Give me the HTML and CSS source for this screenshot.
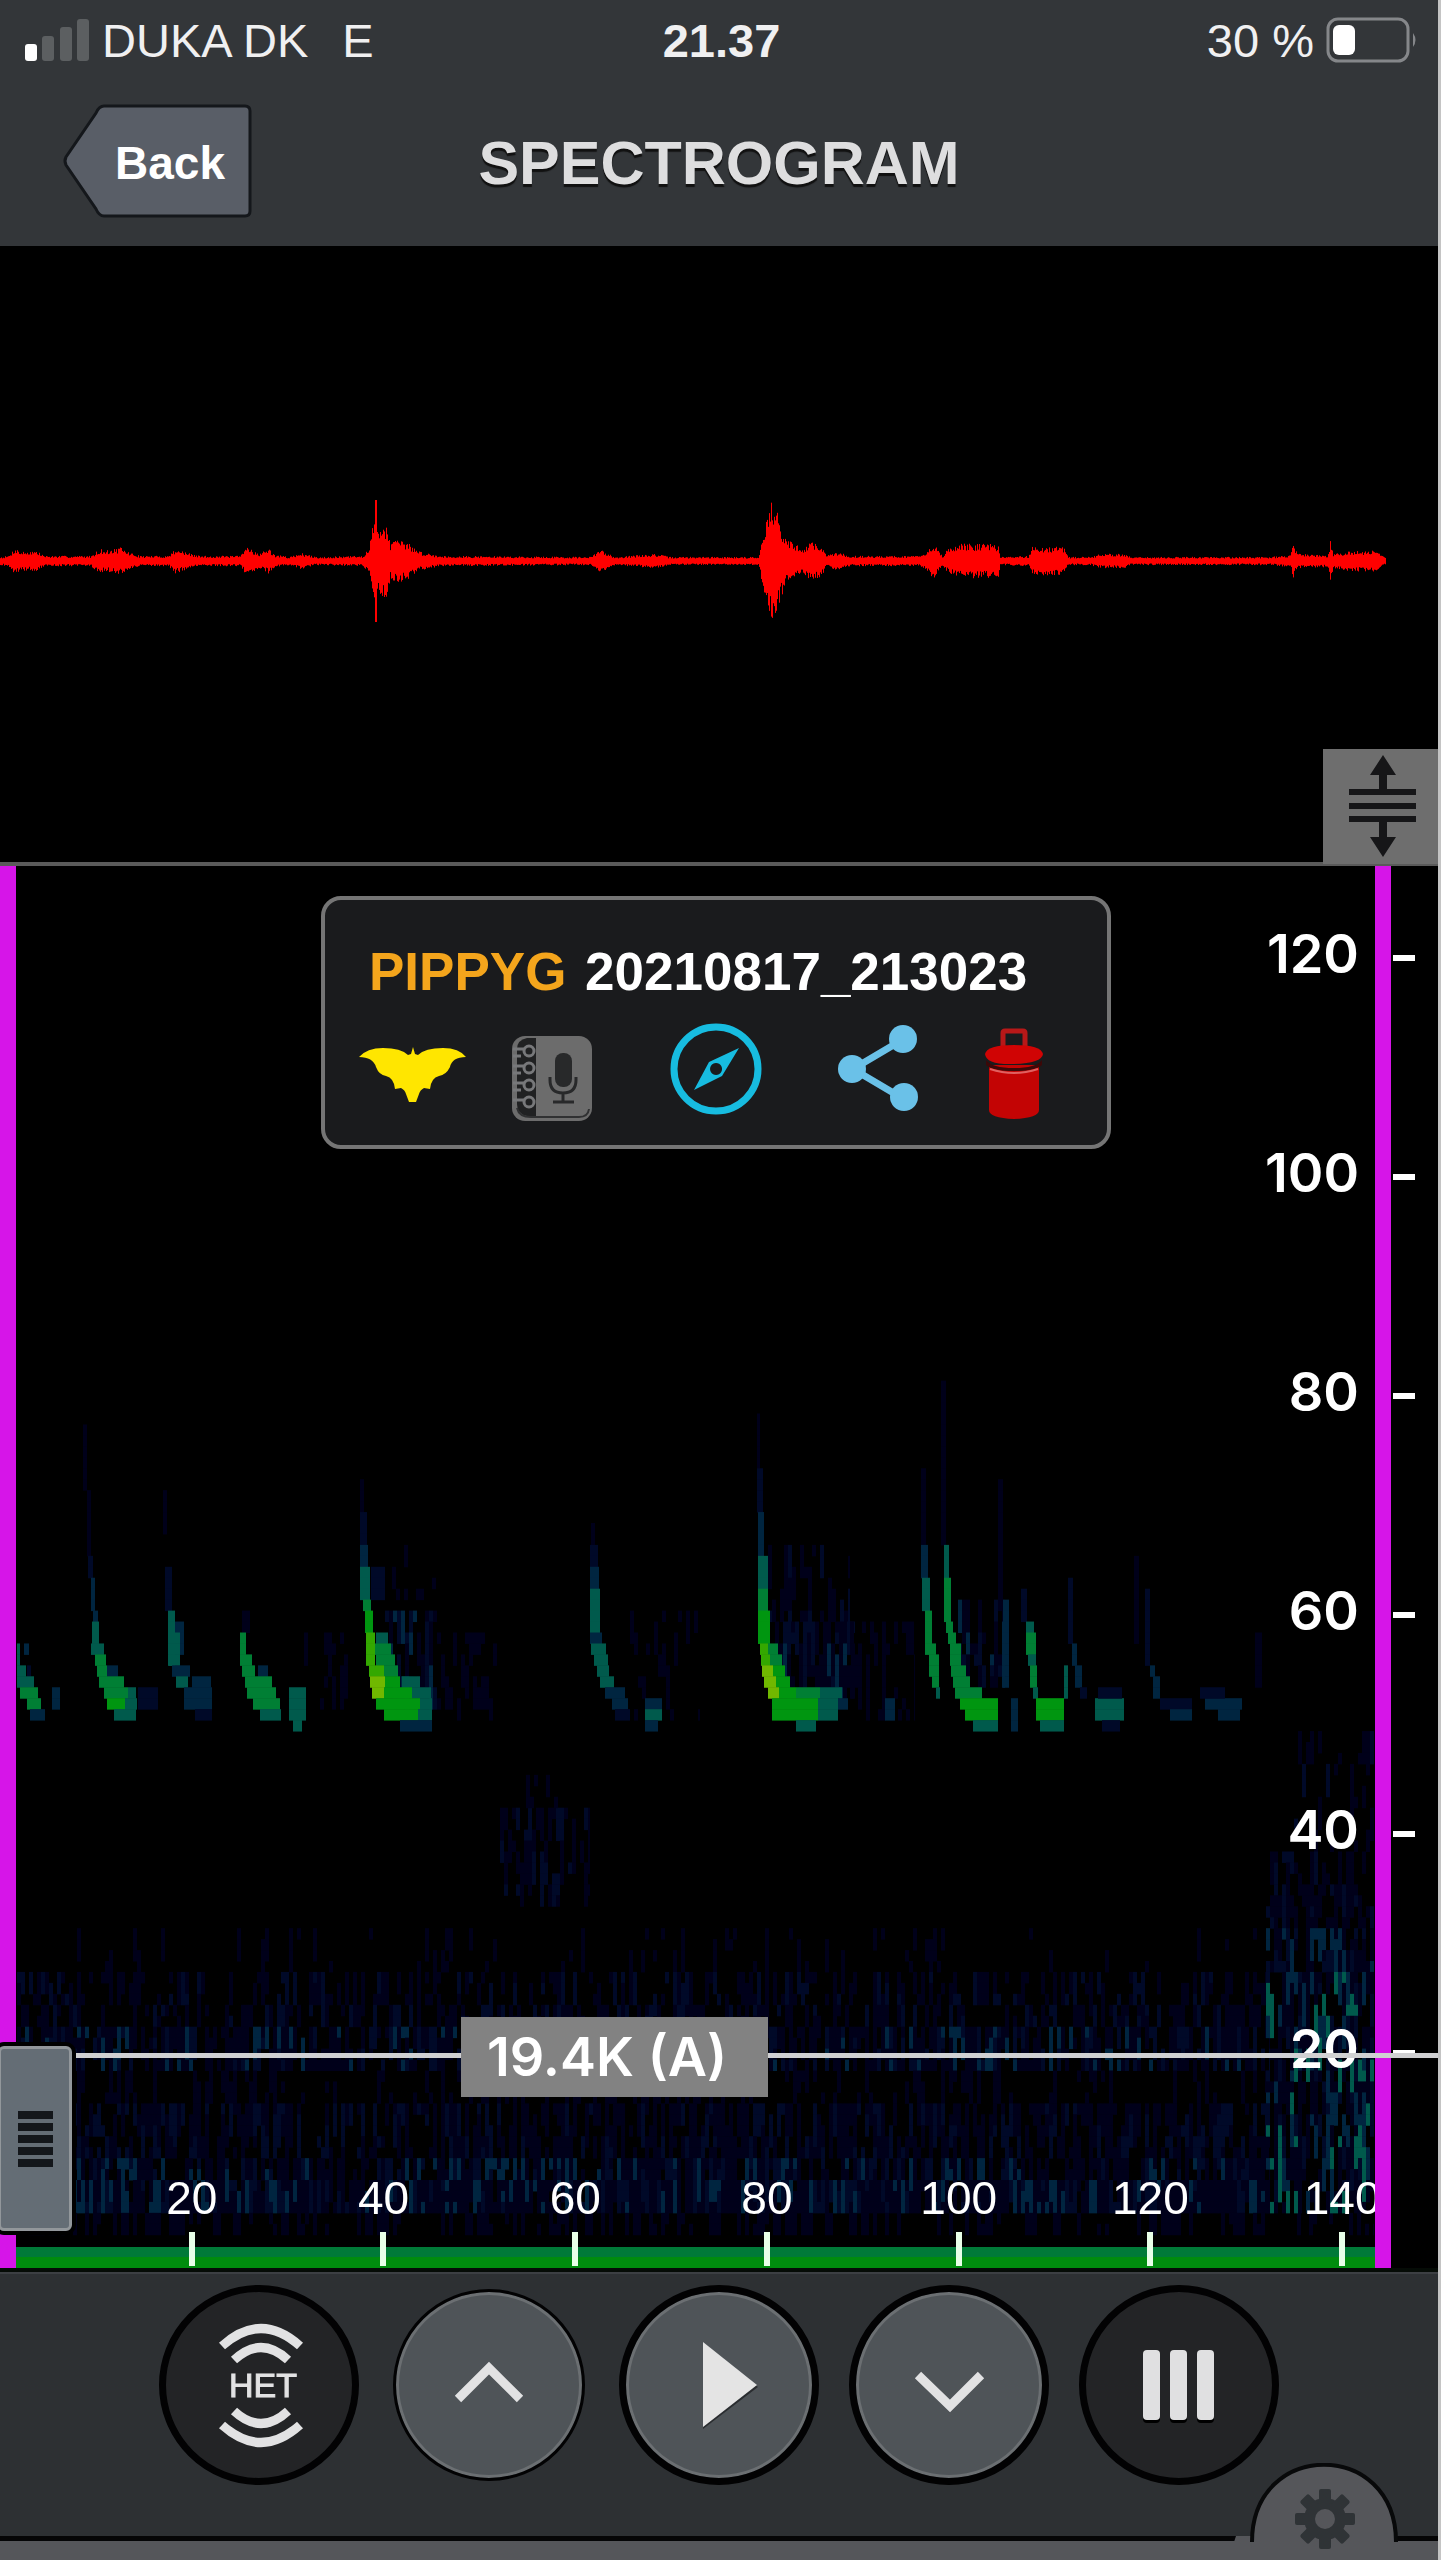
FILE: index.html
```html
<!DOCTYPE html>
<html lang="en">
<head>
<meta charset="utf-8">
<meta name="viewport" content="width=device-width, initial-scale=1">
<title>Spectrogram</title>
<link rel="stylesheet" href="styles.css">
</head>
<body>
<header class="header">
  <div class="status">
    <div class="status-left">
      <svg class="signal" viewBox="0 0 64 42" aria-hidden="true"><rect x="0" y="25" width="12" height="17" rx="3" fill="#fff"/><g fill="#5c5f61"><rect x="17" y="17" width="12" height="25" rx="3"/><rect x="35" y="8" width="12" height="34" rx="3"/><rect x="52" y="0" width="12" height="42" rx="3"/></g></svg>
      <span>DUKA DK</span><span class="network">E</span>
    </div>
    <div class="clock">21.37</div>
    <div class="status-right">
      <span>30 %</span>
      <svg class="battery" viewBox="0 0 92 46" aria-hidden="true"><rect x="2" y="2" width="80" height="42" rx="10" fill="none" stroke="#85878a" stroke-width="3"/><rect x="7" y="8" width="22" height="30" rx="6" fill="#fff"/><path d="M87 16q5 7 0 14z" fill="#85878a"/></svg>
    </div>
  </div>
  <div class="nav">
    <button class="back" type="button">
      <svg class="back-shape" viewBox="0 0 190 114" aria-hidden="true"><path d="M42 2H183q5 0 5 5V107q0 5-5 5H42q-5 0-8-7L4 61q-2-4 0-8L34 9q3-7 8-7z" fill="#595e67" stroke="#14171b" stroke-width="3"/></svg>
      <span class="back-label">Back</span>
    </button>
    <h1 class="title">SPECTROGRAM</h1>
  </div>
</header>
<main class="main">
  <section class="wave" aria-label="Waveform">
    <canvas class="plot" id="wave" width="1438" height="616"></canvas>
    <button class="resize" type="button" aria-label="Resize panes">
      <svg viewBox="0 0 115 114" aria-hidden="true"><path d="M26 42h67M26 56h67M26 69h67" stroke="#161618" stroke-width="6"/><path d="M60 5l13 20h-9v16h-8V25h-9zM60 107l13-20h-9V70h-8v17h-9z" fill="#161618"/></svg>
    </button>
  </section>
  <section class="spec" aria-label="Spectrogram">
    <canvas class="plot" id="spec" width="1438" height="1402"></canvas>
    <div class="card">
      <h2 class="card-title"><span class="species">PIPPYG</span> 20210817_213023</h2>
      <div class="actions">
        <button type="button" aria-label="Species"><svg viewBox="0 0 107 100"><path d="M0 37Q8 28 24 28Q42 28 49 35L52 34L54 27L56 34L59 35Q66 28 84 28Q100 28 107 37Q93 37 91 47Q87 55 80 56Q72 58 71 69L65 68Q61 70 60 74L57 82H50L47 74Q46 70 42 68L36 69Q35 58 27 56Q20 55 17 47Q14 37 0 37z" fill="#ffe600"/></svg></button>
        <button type="button" aria-label="Notes"><svg viewBox="0 0 84 100"><rect x="2" y="16" width="80" height="85" rx="13" fill="#6c6c6c"/><path d="M26 18H17Q7 20 7 29V84Q7 94 17 96h9z" fill="#202122"/><path d="M7 88q2 9 14 9h48q9 0 10-8" fill="none" stroke="#303132" stroke-width="2"/><g fill="none" stroke="#77787a" stroke-width="3"><circle cx="19" cy="31" r="5"/><circle cx="19" cy="48" r="5"/><circle cx="19" cy="65" r="5"/><circle cx="19" cy="82" r="5"/><path d="M3 29h11M3 46h11M3 63h11M3 80h11M3 36h8M3 53h8M3 70h8"/></g><rect x="45" y="33" width="17" height="34" rx="8" fill="#28292a"/><path d="M40 57v3q0 13 13 13t13-13v-3M53 73v9M43 82h21" fill="none" stroke="#28292a" stroke-width="3"/></svg></button>
        <button type="button" aria-label="Location"><svg viewBox="0 0 100 100"><circle cx="51" cy="49" r="42" fill="none" stroke="#17bce0" stroke-width="7"/><path fill-rule="evenodd" d="M74 28L57 56L29 70L44 42zM51 43a6 6 0 1 0 .1 0z" fill="#17bce0"/></svg></button>
        <button type="button" aria-label="Share"><svg viewBox="0 0 84 100"><path d="M66 20L17 49L66 78" fill="none" stroke="#6ac1e8" stroke-width="7"/><g fill="#6ac1e8"><circle cx="67" cy="19" r="14"/><circle cx="16" cy="49" r="14"/><circle cx="68" cy="77" r="14"/></g></svg></button>
        <button type="button" aria-label="Delete"><svg viewBox="0 0 60 100"><path d="M19 28V13q0-2 2-2h18q2 0 2 2v15" fill="none" stroke="#b81818" stroke-width="5"/><path d="M5 45v45q0 8 25 9q25-1 25-9V45z" fill="#c30404"/><path d="M1 34Q3 25 30 25T59 34Q58 43 30 44T1 34z" fill="#d00404"/><path d="M2 40q6 8 28 8t28-8v5q-7 6-28 6T2 45z" fill="#3c0808"/><path d="M6 49q24 8 48 0" fill="none" stroke="#e06060" stroke-width="2"/></svg></button>
      </div>
    </div>
    <div class="freq">
      <div>120</div><div>100</div><div>80</div><div>60</div><div>40</div><div>20</div>
    </div>
    <div class="time">
      <div>20</div><div>40</div><div>60</div><div>80</div><div>100</div><div>120</div><div>140</div>
    </div>
    <div class="limit limit-start"></div>
    <div class="limit limit-end"></div>
    <div class="marker"><output class="marker-label">19.4K (A)</output></div>
    <button class="handle" type="button" aria-label="Move frequency marker"><i></i><i></i><i></i><i></i><i></i></button>
  </section>
</main>
<footer class="toolbar">
  <div class="controls">
    <button class="round dark" type="button" aria-label="Heterodyne">
      <svg viewBox="0 0 200 200"><g fill="none" stroke="#e2e2e3" stroke-width="9"><path d="M63 61Q102 26 141 61M75 75Q102 50 129 75M75 126Q102 151 129 126M63 140Q102 175 141 140"/></g></svg><span class="het">HET</span>
    </button>
    <button class="round thin" type="button" aria-label="Up"><svg viewBox="0 0 200 200"><path d="M69 114L100 83L131 114" fill="none" stroke="#e2e2e3" stroke-width="9"/></svg></button>
    <button class="round" type="button" aria-label="Play"><svg viewBox="0 0 200 200"><path d="M84 60V144L139 102z" fill="#2a2d30"/><path d="M84 57V142L138 100z" fill="#e4e4e4"/></svg></button>
    <button class="round" type="button" aria-label="Down"><svg viewBox="0 0 200 200"><path d="M69 90L101 121L132 90" fill="none" stroke="#e2e2e3" stroke-width="9"/></svg></button>
    <button class="round dark" type="button" aria-label="Columns"><svg viewBox="0 0 200 200"><g fill="#000"><rect x="64" y="68" width="17" height="70" rx="4"/><rect x="91" y="68" width="17" height="70" rx="4"/><rect x="118" y="68" width="17" height="70" rx="4"/></g><g fill="#e0e0e1"><rect x="64" y="65" width="17" height="70" rx="4"/><rect x="91" y="65" width="17" height="70" rx="4"/><rect x="118" y="65" width="17" height="70" rx="4"/></g></svg></button>
  </div>
  <button class="settings" type="button" aria-label="Settings">
    <svg viewBox="0 0 180 97"><path d="M0 79L2 73H17L19 97H0z" fill="#55565a"/><path d="M18 97V79C18 -24 162 -24 162 79V97z" fill="#55565a"/><path d="M18 79C18 -24 162 -24 162 79" fill="none" stroke="#08090a" stroke-width="4"/><g transform="translate(91 56)" fill="#2f3336"><circle r="21"/><rect x="-6" y="-30" width="12" height="60" rx="2"/><rect x="-6" y="-30" width="12" height="60" rx="2" transform="rotate(45)"/><rect x="-6" y="-30" width="12" height="60" rx="2" transform="rotate(90)"/><rect x="-6" y="-30" width="12" height="60" rx="2" transform="rotate(135)"/><circle r="10" fill="#55565a"/></g></svg>
  </button>
</footer>
<script src="plot.js"></script>
</body>
</html>
```
FILE: styles.css
```css
* { box-sizing: border-box; }
body {
  margin: 0;
  min-height: 100vh;
  display: flex;
  flex-direction: column;
  background: #000;
  color: #fff;
  border-right: 3px solid #c4c4c4;
  font-family: "Liberation Sans", Arial, sans-serif;
}
button { padding: 0; border: 0; background: none; color: inherit; font: inherit; display: block; }
svg { display: block; }
h1, h2 { margin: 0; }

.header { background: #333639; }
.status {
  display: grid;
  grid-template-columns: 1fr auto 1fr;
  align-items: center;
  height: 80px;
  padding: 0 20px 0 25px;
  font-size: 47px;
  color: #f0f0f1;
}
.status-left, .status-right { display: flex; align-items: center; }
.status-right { justify-content: flex-end; gap: 12px; }
.signal { width: 64px; height: 42px; margin-right: 13px; }
.network { margin-left: 34px; }
.clock { font-weight: bold; }
.battery { width: 92px; height: 46px; }

.nav {
  display: grid;
  grid-template-columns: 1fr auto 1fr;
  align-items: start;
  height: 166px;
  padding: 24px 62px 0;
}
.back { position: relative; width: 190px; height: 114px; }
.back-shape { width: 100%; height: 100%; }
.back-label {
  position: absolute;
  inset: 4px 0 0 26px;
  display: grid;
  place-items: center;
  font-size: 46px;
  font-weight: bold;
}
.title { font-size: 61px; line-height: 118px; color: #dededf; text-shadow: 0 3px 1px #111; }

.main { flex: 1; display: flex; flex-direction: column; }
.wave { position: relative; flex: 616 1 0; min-height: 300px; border-bottom: 4px solid #5a5a5a; }
.plot { position: absolute; inset: 0; width: 100%; height: 100%; }
.resize { position: absolute; right: 0; bottom: -2px; width: 115px; height: 115px; background: #6e6e6e; }

.spec { position: relative; flex: 1402 1 0; min-height: 900px; overflow: hidden; padding-right: 6px; }
.card {
  position: relative;
  width: 790px;
  margin: 30px auto 0;
  padding: 42px 20px 25px 22px;
  border: 4px solid #757575;
  border-radius: 20px;
  background: #1a1b1d;
}
.card-title { padding-left: 22px; font-size: 53px; line-height: 60px; margin-bottom: 18px; }
.species { color: #f4a51c; margin-right: 4px; }
.actions { display: grid; grid-template-columns: 130px 150px 176px 150px 122px; justify-items: center; }
.actions svg { height: 100px; overflow: visible; }

.freq {
  position: absolute;
  inset: 0 23px 0 auto;
  display: grid;
  grid-template-rows: 118fr repeat(5, 219fr) 189fr;
  align-items: end;
  font: 600 54px/60px Inter, sans-serif;
}
.freq div { display: flex; justify-content: flex-end; align-items: center; gap: 34px; }
.freq div::after { content: ""; width: 22px; height: 6px; margin-top: 8px; background: #fff; }
.time {
  position: absolute;
  inset: auto 0 0 0;
  display: grid;
  grid-template-columns: repeat(7, 1fr);
  padding: 0 0 2px 6.67%;
  font-size: 46px;
  line-height: 52px;
}
.time div { display: flex; flex-direction: column; align-items: center; gap: 8px; }
.time div::after { content: ""; width: 6px; height: 34px; background: #e8ffe8; }

.limit { position: absolute; top: 0; bottom: 0; width: 16px; background: #d615e8; }
.limit-start { left: 0; }
.limit-end { right: 47px; }
.marker {
  position: absolute;
  top: 84.8%;
  left: 75px;
  right: 0;
  height: 5px;
  margin-top: -2px;
  background: #d0d0d2;
}
.marker-label {
  position: absolute;
  top: -36px;
  left: 386px;
  width: 307px;
  padding-left: 26px;
  background: #828282;
  font: 600 54px/80px Inter, sans-serif;
}
.handle {
  position: absolute;
  top: 84.2%;
  left: -2px;
  width: 74px;
  height: 185px;
  display: flex;
  flex-direction: column;
  justify-content: center;
  align-items: center;
  gap: 4px;
  border: 3px solid #92979b;
  border-radius: 6px;
  background: #646d75;
  box-shadow: 0 0 0 4px #000;
}
.handle i { width: 35px; height: 8px; background: #14171b; }

.toolbar { position: relative; height: 292px; background: #2d3033; border-top: 4px solid #050b06; border-bottom: 19px solid #55565a; }
.controls {
  display: flex;
  justify-content: center;
  align-items: center;
  gap: 30px;
  height: 269px;
  padding-bottom: 40px;
  border-top: 2px solid #3c3f43;
  border-bottom: 5px solid #050506;
}
.round {
  position: relative;
  width: 200px;
  height: 200px;
  border: 7px solid #020203;
  border-radius: 50%;
  background: #4f5458;
  box-shadow: inset 0 0 0 3px #6b6f72;
}
.round svg { position: absolute; inset: -7px; width: 200px; height: 200px; }
.dark { background: #232426; box-shadow: none; }
.thin { width: 192px; height: 192px; margin: 0 4px; border-width: 3px; }
.het { position: relative; left: 4px; font-size: 34px; color: #e2e2e3; -webkit-text-stroke: 1px #e2e2e3; }
.settings { position: absolute; right: 24px; bottom: -19px; width: 180px; height: 97px; }
```
FILE: plot.js
```javascript
// Repeatable random numbers, so that the noise is the same on every load.
let seed = 7;
function rnd() {
  seed = (seed * 1664525 + 1013904223) % 4294967296;
  return seed / 4294967296;
}

// Waveform: [x, half amplitude], interpolated between points.
const envelope = [[0,4],[8,5],[15,13],[20,9],[35,10],[45,5],[90,5],[100,12],[105,10],[120,13],[130,8],[140,5],[168,5],[175,12],[190,7],[200,5],[240,5],[247,15],[258,7],[268,12],[275,6],[290,4],[300,8],[315,4],[362,5],[369,12],[372,36],[386,36],[390,18],[400,21],[410,16],[420,9],[440,5],[590,4],[600,11],[615,4],[655,7],[670,4],[758,4],[764,34],[772,60],[777,48],[785,22],[795,16],[803,13],[812,19],[822,14],[826,5],[835,9],[850,5],[920,5],[926,8],[933,18],[942,5],[948,12],[963,17],[998,16],[1000,4],[1028,5],[1032,14],[1050,14],[1064,13],[1068,4],[1090,4],[1100,7],[1125,7],[1130,4],[1270,4],[1290,6],[1293,16],[1297,7],[1327,6],[1330,19],[1333,7],[1350,10],[1375,10],[1386,3]];
const w = document.getElementById("wave").getContext("2d");
w.fillStyle = "#f00";
let k = 0;
for (let x = 0; x < 1386; x++) {
  while (envelope[k + 1][0] <= x && k < envelope.length - 2) k++;
  const [x0, a0] = envelope[k], [x1, a1] = envelope[k + 1];
  const a = a0 + (a1 - a0) * (x - x0) / (x1 - x0);
  const up = a * (0.6 + rnd() * 0.45), down = a * (0.6 + rnd() * 0.45);
  w.fillRect(x, 315 - up, 1, up + down);
}
w.fillRect(375, 254, 2, 122);

// Spectrogram: rows are 11 units high, levels run from quiet to loud.
const levels = ["#00001a", "#000928", "#002540", "#005a4c", "#007f34", "#009610", "#34a800", "#70b800"];
const rowH = 10.95;
const s = document.getElementById("spec").getContext("2d");
function cell(row, x0, x1, level) {
  s.fillStyle = levels[level];
  s.fillRect(x0, row * rowH, x1 - x0, rowH + 0.5);
}
// Noise is made of upright streaks, one to four rows tall.
function noise(x0, x1, r0, r1, density, top) {
  for (let x = x0; x < x1; x += 4)
    for (let r = r0; r < r1;) {
      const len = 1 + Math.floor(rnd() * 3);
      if (rnd() < density) {
        const level = Math.floor(Math.pow(rnd(), 2) * (top + 1));
        for (let i = r; i < Math.min(r + len, r1); i++) cell(i, x, Math.min(x + 4, x1), level);
      }
      r += len;
    }
}
noise(17, 1270, 97, 101, 0.12, 0);
noise(17, 1270, 101, 104, 0.4, 1);
noise(17, 1270, 104, 106, 0.5, 1);
noise(17, 1270, 106, 110, 0.7, 2);
noise(17, 1270, 110, 113, 0.25, 0);
noise(17, 1270, 113, 118, 0.6, 1);
noise(17, 1270, 118, 120, 0.7, 2);
noise(17, 1270, 120, 123, 0.95, 2);
noise(17, 1374, 123, 125, 0.4, 0);
noise(500, 590, 86, 95, 0.5, 1);
noise(510, 575, 83, 86, 0.3, 0);
noise(1290, 1374, 79, 90, 0.25, 1);
noise(1266, 1374, 90, 97, 0.5, 1);
noise(1266, 1374, 97, 101, 0.65, 2);
noise(1266, 1374, 101, 111, 0.75, 3);
noise(1266, 1374, 111, 123, 0.65, 3);
noise(380, 440, 62, 68, 0.2, 0);
noise(385, 445, 68, 77, 0.65, 2);
noise(445, 500, 70, 78, 0.35, 0);
noise(300, 350, 70, 77, 0.25, 0);
noise(630, 700, 68, 78, 0.25, 0);
noise(768, 850, 62, 69, 0.4, 1);
noise(775, 855, 69, 76, 0.7, 2);
noise(850, 915, 69, 78, 0.35, 0);
noise(958, 1005, 67, 75, 0.65, 2);

// Bat calls: [first row, last row, x start, x end, level]
const calls = [
  [71,72,17,20,3],[71,71,24,29,2],[73,73,17,26,3],[73,73,27,31,1],[74,74,17,34,3],[75,75,20,38,4],[76,76,27,41,4],[77,77,30,45,2],[75,76,52,60,2],
  [51,56,83,87,0],[57,62,87,91,0],[63,64,88,93,1],[65,67,91,95,2],[68,68,93,98,2],[69,70,92,99,3],[71,71,91,104,3],[72,72,95,106,4],[73,73,97,107,4],[73,73,107,118,2],[74,74,99,124,4],[75,75,104,128,4],[75,75,128,136,3],[76,76,107,125,5],[76,76,125,137,3],[77,77,114,136,3],[75,76,138,158,1],
  [57,60,163,167,0],[64,67,165,172,1],[68,72,168,175,3],[69,71,175,184,2],[70,72,169,180,3],[73,73,172,190,2],[74,74,176,188,3],[74,74,192,211,2],[75,76,184,212,2],[77,77,195,212,1],
  [68,69,242,250,0],[70,71,240,246,4],[72,72,240,252,4],[73,73,242,255,4],[73,73,258,268,2],[74,74,245,272,4],[75,75,247,276,4],[76,76,253,280,4],[77,77,260,281,3],[75,77,289,306,3],[78,78,293,302,3],
  [56,58,360,364,0],[59,61,360,367,1],[62,63,360,368,2],[64,66,360,370,3],[64,66,371,385,1],[67,67,363,371,4],[68,69,365,373,5],[70,72,366,375,6],[70,70,376,388,3],[71,71,375,391,4],[72,72,376,395,4],[73,73,369,384,6],[73,73,384,398,4],[74,74,370,385,7],[74,74,385,400,5],[74,74,402,420,3],[75,75,372,384,7],[75,75,384,412,5],[75,75,412,431,3],[76,76,376,420,5],[76,76,420,432,3],[77,77,384,418,5],[77,77,418,432,3],[78,78,400,432,2],
  [60,61,591,595,0],[62,63,590,598,1],[64,65,590,599,2],[66,69,590,600,3],[70,70,590,602,2],[71,71,591,606,3],[72,72,594,608,3],[73,73,597,609,3],[74,74,600,614,3],[75,75,605,625,2],[76,76,612,628,2],[77,77,615,630,1],[76,76,645,662,2],[77,77,645,662,3],[78,78,645,658,2],
  [50,54,757,760,0],[55,58,757,763,1],[59,62,758,764,2],[63,65,758,768,3],[66,67,758,768,4],[68,70,758,770,5],[71,71,760,768,6],[71,71,768,778,4],[72,72,761,770,6],[72,72,770,782,4],[73,73,762,773,7],[73,73,773,785,5],[74,74,764,776,7],[74,74,776,790,5],[75,75,768,779,7],[75,75,779,796,5],[75,75,796,820,4],[75,75,820,842,3],[76,77,772,818,5],[76,77,818,838,3],[76,76,838,848,2],[78,78,796,816,3],[76,77,885,895,2],
  [55,62,921,926,0],[62,64,921,928,2],[65,67,922,930,3],[68,70,925,932,4],[71,71,925,936,4],[72,73,929,939,4],[74,74,932,939,4],[75,75,936,940,3],
  [47,61,941,946,0],[62,64,944,949,3],[65,68,944,951,4],[69,69,946,953,4],[70,70,948,956,4],[71,72,950,961,4],[73,73,951,966,4],[74,74,953,970,4],[75,75,955,982,4],[76,76,960,998,5],[77,77,965,998,5],[78,78,973,998,3],[67,74,1003,1009,2],[76,78,1011,1018,2],[56,66,998,1003,0],
  [66,68,1021,1027,1],[69,69,1026,1034,3],[70,71,1026,1036,4],[72,72,1028,1036,3],[73,74,1030,1037,4],[75,75,1033,1038,3],[76,77,1036,1064,5],[78,78,1040,1064,3],[73,75,1064,1068,3],
  [65,70,1068,1073,1],[71,72,1072,1077,2],[73,74,1075,1082,2],[75,75,1080,1087,1],[76,77,1095,1124,3],[75,75,1098,1122,1],[78,78,1102,1120,1],
  [63,70,1134,1139,0],[66,72,1145,1150,1],[73,73,1150,1155,2],[74,75,1153,1160,2],[76,76,1160,1192,1],[77,77,1170,1192,2],[76,76,1205,1242,2],[75,75,1200,1225,1],[77,77,1218,1240,2],[70,74,1255,1262,0]
];
for (const [r0, r1, x0, x1, level] of calls)
  for (let r = r0; r <= r1; r++) cell(r, x0, x1, level);

// Green base line under the plot.
s.fillStyle = "#007a38";
s.fillRect(16, 1381, 1359, 10);
s.fillStyle = "#008c0e";
s.fillRect(16, 1391, 1359, 11);
```
